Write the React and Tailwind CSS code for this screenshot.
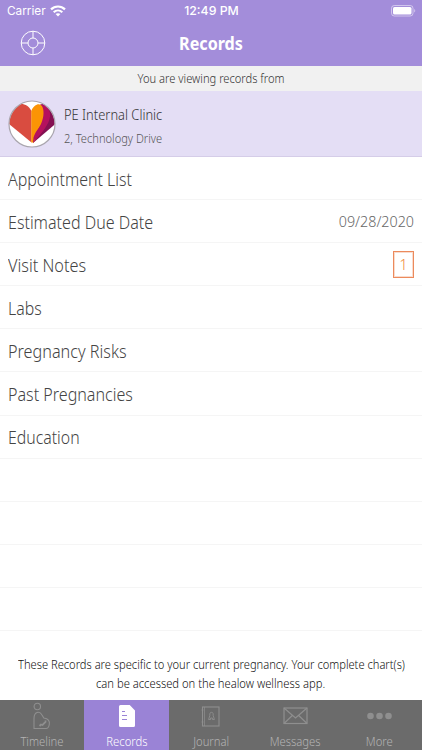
import React from 'react';

const records = [
  { label: 'Appointment List', scale: 'scale-x-[0.912]' },
  { label: 'Estimated Due Date', scale: 'scale-x-[0.918]', date: '09/28/2020' },
  { label: 'Visit Notes', scale: 'scale-x-[0.93]', count: 1 },
  { label: 'Labs', scale: 'scale-x-[0.905]' },
  { label: 'Pregnancy Risks', scale: 'scale-x-[0.926]' },
  { label: 'Past Pregnancies', scale: 'scale-x-[0.919]' },
  { label: 'Education', scale: 'scale-x-[0.905]' },
];

const emptyRows = [1, 2, 3, 4];

const TargetIcon = () => (
  <svg width="26" height="26" viewBox="0 0 26 26" fill="none" stroke="white" strokeWidth="1">
    <circle cx="13" cy="13" r="11.8" />
    <circle cx="13" cy="13" r="5" />
    <path d="M13 1v7M13 18v7M1 13h7M18 13h7" />
  </svg>
);

const WifiIcon = () => (
  <svg width="16" height="12" viewBox="0 0 16 12" fill="none" stroke="white" strokeWidth="2.2">
    <path d="M1 4.4C5 .5 11 .5 15 4.4" />
    <path d="M3.7 7.2c2.5-2.3 6.1-2.3 8.6 0" />
    <path d="M8 11.4 5.6 9.1c1.4-1.2 3.4-1.2 4.8 0z" fill="white" stroke="none" />
  </svg>
);

const BatteryIcon = () => (
  <svg width="25" height="12" viewBox="0 0 25 12">
    <rect x=".5" y=".5" width="21.5" height="10.5" rx="2.8" fill="none" stroke="white" strokeOpacity=".5" />
    <rect x="2" y="2" width="18.5" height="7.5" rx="1.5" fill="white" />
    <path d="M23.2 4v3.5c1.4-.5 1.4-3 0-3.5z" fill="white" fillOpacity=".5" />
  </svg>
);

const ClinicLogo = () => (
  <svg width="48" height="48" viewBox="0 0 48 48">
    <defs>
      <clipPath id="logo">
        <circle cx="24" cy="24" r="22.8" />
      </clipPath>
    </defs>
    <circle cx="24" cy="24" r="23" fill="white" />
    <g clipPath="url(#logo)">
      <path d="M33 4.500c7-3 16 4 15 19L25 43z" fill="#841052" />
      <path d="M32 4.500c7-1 11 6 10 12-1 8-7 15-17 26.500z" fill="#b5115e" />
      <path d="M23.500 11C20 4 13 2 6 6-3 12-3 20 1 24l22.500 18.500z" fill="#d94c40" />
      <path d="M23.300 11C26 4.500 32 2 34.500 7c2 5 1 12-2 18-2.500 5-5 8-6.500 17.500h-2.700z" fill="#fb9405" />
      <path d="M33.500 24c-2 5-5.500 10-7.500 18l-1 .5.500-5c2-6 5-9 8-13.500z" fill="#b5115e" />
    </g>
    <circle cx="24" cy="24" r="23" fill="none" stroke="#aaa6ae" strokeWidth="1.200" />
  </svg>
);

const TimelineIcon = () => (
  <svg width="26" height="28" viewBox="0 0 26 28" fill="none" stroke="currentColor" strokeWidth="1.100">
    <circle cx="8.300" cy="4.500" r="3.200" />
    <path d="M5 26.500V16.500c0-7 5.500-8 8-3.500l1.800 3c4.700.5 6.200 3.500 5.500 6.500-.4 2.500-1.500 4-3.300 4z" />
    <path d="m10.500 24 1.500-1.500 1.500.5 3-3v-1.500" strokeWidth="1.800" />
  </svg>
);

const RecordsIcon = () => (
  <svg width="18" height="24" viewBox="0 0 18 24">
    <path d="M2.500 1h9.200L17 6.500v15a1.500 1.500 0 0 1-1.500 1.500h-13A1.500 1.500 0 0 1 1 21.500v-19A1.500 1.500 0 0 1 2.500 1z" fill="white" />
    <path d="M4 7.500h3M4 11.500h5M4 15.500h5" stroke="#9a83d6" strokeWidth="1" />
  </svg>
);

const JournalIcon = () => (
  <svg width="19" height="21" viewBox="0 0 19 21" fill="none" stroke="currentColor" strokeWidth="1.100">
    <rect x="1.500" y="1" width="16.500" height="19" />
    <path d="M3.500 1v19M.5 4h2M.5 16h2" strokeWidth=".7" />
    <path d="M8.800 9.500V7.800c0-1.900 3.400-1.900 3.400 0v1.700l1.200 4h-2v-1.500H9.600v1.500h-2z" strokeWidth=".9" />
  </svg>
);

const MessagesIcon = () => (
  <svg width="25" height="18" viewBox="0 0 25 18" fill="none" stroke="currentColor" strokeWidth="1.200">
    <rect x="1" y="1" width="23" height="15.500" />
    <path d="m1 1 11.500 10L24 1M1 16.500l8.300-8M24 16.500l-8.300-8" />
  </svg>
);

const MoreIcon = () => (
  <svg width="25" height="8" viewBox="0 0 25 8" fill="currentColor">
    <circle cx="3.500" cy="4" r="3.300" />
    <circle cx="12.500" cy="4" r="3.300" />
    <circle cx="21.500" cy="4" r="3.300" />
  </svg>
);

const tabs = [
  { label: 'Timeline', Icon: TimelineIcon },
  { label: 'Records', Icon: RecordsIcon, active: true },
  { label: 'Journal', Icon: JournalIcon },
  { label: 'Messages', Icon: MessagesIcon },
  { label: 'More', Icon: MoreIcon },
];

const App = () => {
  return (
    <div className="flex h-[750px] w-[422px] flex-col overflow-hidden bg-white font-['Noto_Sans',sans-serif] text-[#444]">
      <header className="h-[66px] shrink-0 bg-[#a38dda] text-white">
        <div className="grid h-[22px] grid-cols-3 items-center pr-1.5 pl-[7px] font-['Inter',sans-serif]">
          <div className="flex items-center gap-1">
            <span className="pt-0.5 text-[11.8px]">Carrier</span>
            <WifiIcon />
          </div>
          <span className="pt-px text-center text-[12.3px] font-medium whitespace-nowrap">12:49 PM</span>
          <div className="flex justify-end">
            <BatteryIcon />
          </div>
        </div>
        <div className="grid h-[42px] grid-cols-[64px_1fr_64px] items-center">
          <div className="pl-5">
            <TargetIcon />
          </div>
          <h1 className="scale-x-95 pt-0.5 text-center text-[17px] font-bold">Records</h1>
        </div>
      </header>

      <p className="flex h-[25px] shrink-0 items-center justify-center bg-[#f1f1f1]">
        <span className="scale-x-[0.93] text-xs font-[350] text-[#333]">You are viewing records from</span>
      </p>

      {/* Clinic */}
      <section className="flex h-[66px] shrink-0 items-center gap-2 border-b border-[#d5cde8] bg-[#e4def5] pl-2">
        <ClinicLogo />
        <div className="pt-1.5">
          <p className="origin-left scale-x-[0.89] text-[14.5px] leading-6 font-light text-[#333]">PE Internal Clinic</p>
          <p className="origin-left scale-x-[0.925] pt-px text-xs leading-6 font-light text-[#555]">2, Technology Drive</p>
        </div>
      </section>

      <ul className="shrink-0">
        {records.map((record) => (
          <li key={record.label} className="flex h-[43.1px] items-center justify-between border-b border-[#f5f5f5] px-2">
            <span className={`origin-left pt-0.5 text-[17.5px] font-light whitespace-nowrap ${record.scale}`}>{record.label}</span>
            {record.date && <span className="pt-0.5 text-[14.3px] font-light text-[#666]">{record.date}</span>}
            {record.count && (
              <span className="flex h-[27px] w-[21px] items-center justify-center border border-[#ec8a5c] text-[15px] font-light text-[#f08c3c] ring-1 ring-[#ec8a5c]/30 ring-inset">
                {record.count}
              </span>
            )}
          </li>
        ))}
        {emptyRows.map((row) => (
          <li key={row} className="h-[43.1px] border-b border-[#f5f5f5]"></li>
        ))}
      </ul>

      <div className="flex min-h-0 flex-1 flex-col items-center pt-[25px] text-xs leading-[18.5px] font-[350] whitespace-nowrap text-[#111]">
        <p className="scale-x-[0.928]">These Records are specific to your current pregnancy. Your complete chart(s)</p>
        <p className="scale-x-[0.935]">can be accessed on the healow wellness app.</p>
      </div>

      <nav className="grid h-[50px] shrink-0 grid-cols-5 bg-[#6b6b6b]">
        {tabs.map(({ label, Icon, active }) => (
          <div key={label} className={`flex flex-col items-center ${active ? 'bg-[#9a83d6] text-white' : 'text-[#8f8f8f]'}`}>
            <div className="flex h-[32px] items-center">
              <Icon />
            </div>
            <span className={`scale-x-[0.94] text-xs leading-[19px] font-light ${active ? 'text-white' : 'text-[#b4b4b4]'}`}>{label}</span>
          </div>
        ))}
      </nav>
    </div>
  );
};

export default App;
